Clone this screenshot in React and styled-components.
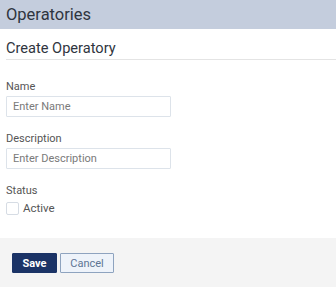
import styled, { createGlobalStyle } from 'styled-components';

const Global = createGlobalStyle`
  html, body {
    margin: 0;
    padding: 0;
    background: #f4f4f4;
    font-family: Roboto, 'Liberation Sans', sans-serif;
  }
`;

const Page = styled.div`
  width: 336px;
  height: 287px;
  display: flex;
  flex-direction: column;
  overflow: hidden;
`;

const TopBar = styled.div`
  height: 29px;
  line-height: 30px;
  padding-left: 6px;
  background: #c4cddd;
  color: #2f3540;
  font-size: 16.5px;
`;

const Panel = styled.div`
  background: #fff;
  height: 209px;
  padding: 0 0 0 6px;
`;

const PanelTitle = styled.h2`
  margin: 0;
  padding-top: 9px;
  height: 21px;
  line-height: 21px;
  font-size: 14.6px;
  font-weight: 400;
  color: #2f3540;
  border-bottom: 1px solid #e4e4e4;
`;

const Form = styled.div`
  padding-top: 20px;
  display: flex;
  flex-direction: column;
`;

const Field = styled.div`
  display: flex;
  flex-direction: column;
  margin-bottom: 15px;
`;

const Label = styled.label`
  font-size: 11px;
  line-height: 13px;
  color: #555;
  margin-bottom: ${p => p.$gap ?? 3}px;
`;

const Input = styled.input`
  box-sizing: border-box;
  width: 165px;
  height: 21px;
  border: 1px solid #dde3ea;
  border-radius: 1px;
  padding: 0 6px;
  font-family: Roboto, 'Liberation Sans', sans-serif;
  font-size: 11px;
  color: #333;
  outline: none;
  &::placeholder {
    color: #7a7a7a;
  }
`;

const CheckRow = styled.div`
  display: flex;
  align-items: center;
  gap: 4px;
`;

const Box = styled.span`
  display: inline-block;
  box-sizing: border-box;
  width: 13px;
  height: 13px;
  border: 1px solid #d6dce4;
  border-radius: 2px;
  background: #fff;
`;

const CheckText = styled.span`
  font-size: 11.5px;
  color: #555;
`;

const Footer = styled.div`
  flex: 1;
  background: #f4f4f4;
  display: flex;
  gap: 3px;
  padding: 15px 0 0 12px;
  align-items: flex-start;
`;

const Button = styled.button`
  box-sizing: border-box;
  height: 20px;
  width: ${p => p.$w}px;
  padding: 0;
  font-family: Roboto, 'Liberation Sans', sans-serif;
  font-size: 11px;
  font-weight: ${p => (p.$primary ? 700 : 400)};
  color: ${p => (p.$primary ? '#fff' : '#5d7594')};
  background: ${p => (p.$primary ? '#1b3366' : '#eef3fa')};
  border: 1px solid ${p => (p.$primary ? '#1b3366' : '#8ea3bf')};
  border-radius: 1px;
  cursor: pointer;
`;

export default function App() {
  return (
    <Page>
      <Global />
      <TopBar>Operatories</TopBar>
      <Panel>
        <PanelTitle>Create Operatory</PanelTitle>
        <Form>
          <Field>
            <Label>Name</Label>
            <Input placeholder="Enter Name" />
          </Field>
          <Field>
            <Label>Description</Label>
            <Input placeholder="Enter Description" />
          </Field>
          <Field>
            <Label $gap={4}>Status</Label>
            <CheckRow>
              <Box />
              <CheckText>Active</CheckText>
            </CheckRow>
          </Field>
        </Form>
      </Panel>
      <Footer>
        <Button $primary $w={45}>Save</Button>
        <Button $w={54}>Cancel</Button>
      </Footer>
    </Page>
  );
}
